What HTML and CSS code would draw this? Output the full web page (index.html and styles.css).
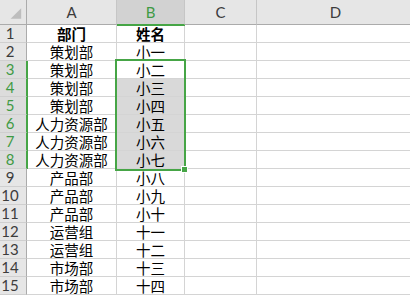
FILE: index.html
```html
<!DOCTYPE html>
<html lang="zh-CN">
<head>
    <meta charset="UTF-8">
    <title>部门名单</title>
    <link rel="stylesheet" href="styles.css">
</head>
<body>

<div class="sheet">
    <div class="grid">
        <!-- header row -->
        <div class="corner">
            <svg width="27" height="25" viewBox="0 0 27 25"><polygon points="22,8 22,19 11,19" fill="#bdbdbd"/></svg>
        </div>
        <div class="col-head">A</div>
        <div class="col-head active">B</div>
        <div class="col-head">C</div>
        <div class="col-head">D</div>

        <div class="row-head">1</div><div class="cell bold">部门</div><div class="cell bold">姓名</div><div class="cell"></div><div class="cell"></div>
        <div class="row-head">2</div><div class="cell">策划部</div><div class="cell">小一</div><div class="cell"></div><div class="cell"></div>
        <div class="row-head active">3</div><div class="cell">策划部</div><div class="cell">小二</div><div class="cell"></div><div class="cell"></div>
        <div class="row-head active">4</div><div class="cell">策划部</div><div class="cell picked">小三</div><div class="cell"></div><div class="cell"></div>
        <div class="row-head active">5</div><div class="cell">策划部</div><div class="cell picked">小四</div><div class="cell"></div><div class="cell"></div>
        <div class="row-head active">6</div><div class="cell">人力资源部</div><div class="cell picked">小五</div><div class="cell"></div><div class="cell"></div>
        <div class="row-head active">7</div><div class="cell">人力资源部</div><div class="cell picked">小六</div><div class="cell"></div><div class="cell"></div>
        <div class="row-head active">8</div><div class="cell">人力资源部</div><div class="cell picked">小七</div><div class="cell"></div><div class="cell"></div>
        <div class="row-head">9</div><div class="cell">产品部</div><div class="cell">小八</div><div class="cell"></div><div class="cell"></div>
        <div class="row-head">10</div><div class="cell">产品部</div><div class="cell">小九</div><div class="cell"></div><div class="cell"></div>
        <div class="row-head">11</div><div class="cell">产品部</div><div class="cell">小十</div><div class="cell"></div><div class="cell"></div>
        <div class="row-head">12</div><div class="cell">运营组</div><div class="cell">十一</div><div class="cell"></div><div class="cell"></div>
        <div class="row-head">13</div><div class="cell">运营组</div><div class="cell">十二</div><div class="cell"></div><div class="cell"></div>
        <div class="row-head">14</div><div class="cell">市场部</div><div class="cell">十三</div><div class="cell"></div><div class="cell"></div>
        <div class="row-head">15</div><div class="cell">市场部</div><div class="cell">十四</div><div class="cell"></div><div class="cell"></div>
    </div>

    <!-- selected range B3:B8 -->
    <div class="selection">
        <span class="handle"></span>
    </div>
</div>

</body>
</html>
```

FILE: styles.css
```css
body {
    margin: 0;
    overflow: hidden;
    background-color: #fff;
}
.sheet {
    position: relative;
}
.grid {
    display: grid;
    grid-template-columns: 27px 90px 68px 72px 158px;
    grid-template-rows: 25px repeat(15, 18px);
}
.corner,
.col-head,
.row-head,
.cell {
    box-sizing: border-box;
    display: flex;
    align-items: center;
    justify-content: center;
}
.corner {
    background-color: #e6e6e6;
    border-right: 1px solid #ababab;
    border-bottom: 1px solid #ababab;
}
.corner svg {
    display: block;
}
.col-head,
.row-head {
    font-family: Lato, "Liberation Sans", sans-serif;
    font-size: 15px;
    line-height: 15px;
    color: #3c3c3c;
    background-color: #e6e6e6;
}
.col-head {
    border-right: 1px solid #c6c6c6;
    border-bottom: 1px solid #ababab;
    padding-top: 1px;
}
.col-head.active {
    background-color: #d2d2d2;
    color: #3f9a44;
    position: relative;
    z-index: 1;
    box-shadow: 0 1px 0 #46a546;
    border-bottom-color: #46a546;
}
.row-head {
    border-right: 1px solid #ababab;
    border-bottom: 1px solid #cfcfcf;
    padding-right: 6px;
}
.row-head.active {
    color: #3f9a44;
    background-color: #dcdcdc;
    border-right-color: #46a546;
    position: relative;
    z-index: 1;
    box-shadow: 1px 0 0 #46a546;
}
.cell {
    border-right: 1px solid #d4d4d4;
    border-bottom: 1px solid #d4d4d4;
    font-family: "Noto Sans CJK SC", sans-serif;
    font-size: 14.5px;
    line-height: 15px;
    color: #000;
    white-space: nowrap;
}
.cell.bold {
    font-weight: bold;
}
.cell.picked {
    background-color: #d9d9d9;
}
.selection {
    position: absolute;
    left: 115px;
    top: 59px;
    width: 71px;
    height: 112px;
    box-sizing: border-box;
    border: 2px solid #46a546;
    z-index: 2;
}
.handle {
    position: absolute;
    right: -4px;
    bottom: -4px;
    width: 5px;
    height: 5px;
    background-color: #46a546;
    border: 1px solid #fff;
}
```
